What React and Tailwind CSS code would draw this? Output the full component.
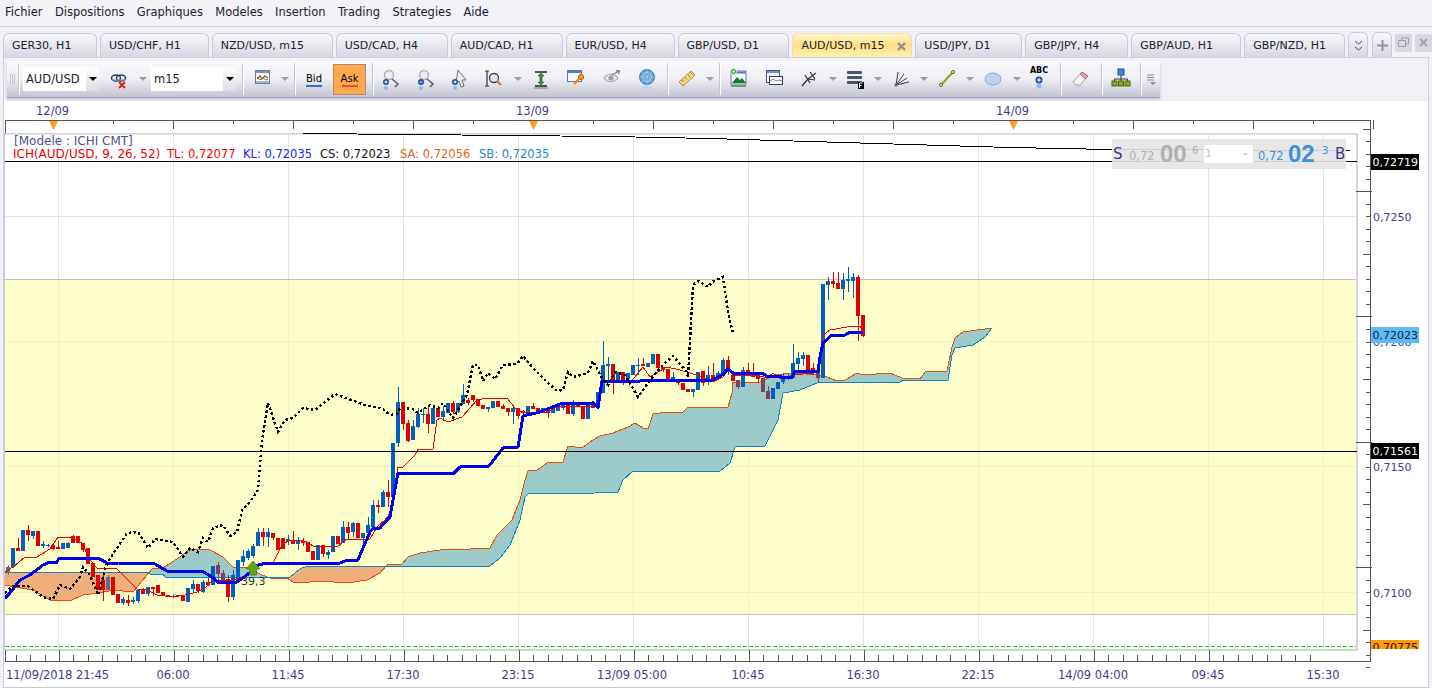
import React from 'react';

const font = '"DejaVu Sans", Verdana, sans-serif';

const menus = ['Fichier', 'Dispositions', 'Graphiques', 'Modeles', 'Insertion', 'Trading', 'Strategies', 'Aide'];

const tabs = [
  { label: 'GER30, H1', w: 'w-[94px]' },
  { label: 'USD/CHF, H1', w: 'w-[109px]' },
  { label: 'NZD/USD, m15', w: 'w-[121px]' },
  { label: 'USD/CAD, H4', w: 'w-[112px]' },
  { label: 'AUD/CAD, H1', w: 'w-[112px]' },
  { label: 'EUR/USD, H4', w: 'w-[109px]' },
  { label: 'GBP/USD, D1', w: 'w-[112px]' },
  { label: 'AUD/USD, m15', w: 'w-[120px]', active: true },
  { label: 'USD/JPY, D1', w: 'w-[107px]' },
  { label: 'GBP/JPY, H4', w: 'w-[103px]' },
  { label: 'GBP/AUD, H1', w: 'w-[110px]' },
  { label: 'GBP/NZD, H1', w: 'w-[101px]' },
];

// [haut, bas, meche haut, meche bas, couleur] - un chandelier tous les 5px depuis x=8
const candles = [
  [567,573,565,575,'d'],[548,567,548,568,'b'],[548,551,538,551,'r'],[530,551,530,551,'b'],[530,535,525,541,'r'],
  [531,536,531,539,'b'],[531,546,531,546,'r'],[544,546,541,548,'b'],[545,546,544,547,'b'],[545,549,543,550,'r'],
  [547,549,541,549,'r'],[543,549,543,549,'b'],[543,548,542,548,'b'],[536,543,535,543,'r'],[536,543,536,543,'r'],
  [543,550,543,552,'r'],[548,564,548,564,'r'],[563,577,563,577,'r'],[575,590,575,590,'r'],[580,590,575,601,'r'],
  [577,590,575,590,'d'],[577,595,577,595,'r'],[594,603,594,603,'r'],[599,603,597,605,'b'],[600,603,595,606,'r'],
  [600,602,597,604,'b'],[590,601,590,603,'b'],[590,594,588,594,'r'],[587,594,587,596,'b'],[587,589,587,596,'r'],
  [585,593,585,593,'r'],[592,596,592,596,'r'],[595,596,595,597,'r'],[596,597,594,598,'b'],[595,596,595,597,'r'],
  [596,601,596,601,'r'],[588,602,588,602,'b'],[584,589,580,593,'b'],[584,591,584,593,'r'],[582,592,580,593,'b'],
  [582,585,578,586,'r'],[566,585,566,585,'b'],[565,574,562,581,'m'],[573,580,570,583,'m'],[579,597,575,602,'r'],
  [575,597,570,600,'b'],[560,582,560,582,'b'],[556,562,550,566,'b'],[551,558,549,560,'b'],[546,556,544,558,'b'],
  [532,546,528,546,'b'],[532,537,528,546,'r'],[532,537,528,547,'b'],[533,538,533,540,'r'],[538,550,538,550,'r'],
  [538,549,538,549,'r'],[539,541,535,545,'b'],[540,544,531,544,'r'],[541,544,537,550,'b'],[541,543,538,546,'r'],
  [542,552,542,552,'r'],[551,560,551,560,'r'],[545,560,545,560,'b'],[545,554,545,557,'r'],[552,555,550,559,'b'],
  [536,552,536,552,'b'],[536,544,536,544,'r'],[527,543,521,543,'b'],[527,533,522,540,'r'],[523,532,522,537,'b'],
  [523,538,523,538,'r'],[533,538,533,545,'b'],[525,533,517,533,'b'],[505,527,500,527,'b'],[505,507,500,513,'r'],
  [492,507,490,507,'b'],[492,497,480,507,'r'],[443,497,443,500,'b'],[402,443,387,447,'b'],[402,424,402,430,'r'],
  [423,441,420,442,'r'],[426,440,420,440,'b'],[414,427,408,428,'b'],[414,415,408,423,'b'],[414,424,405,433,'r'],
  [408,424,408,424,'b'],[408,417,406,417,'r'],[411,417,406,421,'b'],[403,413,403,413,'b'],[403,412,401,414,'r'],
  [403,412,403,413,'b'],[395,404,384,404,'b'],[400,403,398,405,'r'],[395,400,395,402,'r'],[399,406,399,406,'r'],
  [405,409,405,409,'r'],[407,409,407,412,'b'],[401,408,401,408,'b'],[401,407,401,407,'r'],[406,409,404,409,'r'],
  [408,412,408,416,'r'],[408,412,406,424,'b'],[408,416,408,419,'r'],[411,413,410,414,'r'],[406,416,406,416,'b'],
  [406,409,403,409,'r'],[408,412,408,412,'r'],[408,411,408,412,'b'],[408,413,408,418,'r'],[408,413,408,413,'b'],
  [405,411,405,411,'b'],[404,408,402,410,'b'],[405,414,405,414,'r'],[402,414,400,416,'b'],[402,407,402,407,'r'],
  [406,419,406,419,'r'],[403,419,403,419,'b'],[402,408,402,408,'r'],[392,408,392,408,'b'],[365,393,341,393,'b'],
  [364,366,357,383,'b'],[364,380,364,394,'r'],[372,381,372,381,'b'],[372,381,372,385,'r'],[373,379,373,380,'b'],
  [365,375,365,375,'b'],[365,366,358,375,'b'],[364,366,358,366,'r'],[363,367,363,367,'b'],[354,364,354,364,'b'],
  [354,368,354,368,'r'],[367,370,367,372,'r'],[369,379,369,379,'r'],[377,379,372,382,'b'],[380,383,380,385,'r'],
  [383,390,383,390,'r'],[389,392,389,392,'r'],[389,392,389,397,'b'],[372,390,372,390,'b'],[371,383,371,386,'r'],
  [375,380,366,385,'b'],[375,379,363,382,'r'],[373,378,371,380,'b'],[360,375,358,375,'b'],[360,372,356,375,'r'],
  [375,381,375,381,'r'],[380,387,380,389,'m'],[370,387,367,387,'b'],[370,376,363,376,'r'],[373,377,363,377,'r'],
  [376,379,376,383,'r'],[378,392,378,392,'m'],[391,399,386,399,'m'],[388,399,388,399,'b'],[382,389,382,389,'b'],
  [377,382,373,384,'b'],[376,378,374,380,'b'],[363,378,344,378,'b'],[358,364,352,373,'b'],[355,359,352,366,'b'],
  [355,371,355,371,'r'],[368,372,363,375,'r'],[371,378,363,383,'m'],[284,378,284,378,'b'],[281,285,277,300,'b'],
  [281,284,272,288,'r'],[283,289,272,289,'r'],[280,289,273,300,'b'],[279,281,267,292,'b'],[277,281,273,298,'b'],
  [277,316,275,341,'r'],[315,336,315,337,'r'],
];

const tenkan = '5,572 13,567 25,557 37,557 50,549 58,537 72,537 82,543 90,560 97,568 117,569 123,575 137,589 147,590 157,595 173,597 185,595 197,592 205,588 213,580 220,581 233,580 242,577 248,574 260,565 273,563 282,545 288,541 300,540 307,542 313,546 332,546 337,547 343,542 347,539 370,539 377,527 385,520 390,513 397,477 398,467 403,467 415,455 418,449 433,449 437,420 440,418 448,422 462,417 477,400 487,398 507,398 515,408 522,412 547,412 557,407 580,406 597,407 602,380 610,382 617,382 630,383 643,367 650,377 658,372 667,367 680,370 690,373 700,376 713,382 723,377 728,369 735,375 757,375 767,378 773,373 780,379 793,375 813,373 818,370 820,357 823,335 830,330 847,327 860,326 863,332';
const kijun = '5,598 10,593 20,580 30,575 43,565 50,562 57,562 59,558 98,558 107,563 118,563 155,564 167,571 202,571 212,577 218,582 237,582 247,575 258,565 267,563 340,563 345,561 358,560 363,548 370,532 372,529 380,528 390,517 393,500 398,473 454,473 460,467 489,466 503,448 518,447 523,416 540,412 560,404 593,403 598,407 602,381 640,381 647,380 713,380 722,375 728,369 733,373 762,373 767,376 777,376 782,377 792,377 795,371 818,371 820,357 823,343 832,335 845,335 850,332 863,332';
const chikou = '5,593 13,586 28,586 43,597 53,599 60,585 70,589 80,577 83,567 90,575 98,595 107,563 127,533 138,532 148,548 155,539 173,542 183,557 190,548 198,552 203,538 208,542 213,528 223,525 230,536 237,532 242,510 250,502 258,490 262,440 268,403 278,432 285,420 293,418 303,408 315,410 335,394 365,405 383,409 390,415 397,414 400,408 413,409 418,413 430,405 438,408 443,403 453,418 467,395 473,365 478,365 483,381 488,373 495,379 503,365 517,364 523,356 533,368 547,382 557,391 563,390 568,372 573,377 588,373 593,361 602,378 608,385 615,372 625,375 638,397 650,380 663,365 673,356 687,372 688,377 693,285 698,281 708,287 712,282 723,277 728,312 733,333';
const spanA = '5,585 15,587 33,590 50,600 70,601 83,595 100,593 113,590 133,592 147,575 153,568 163,568 180,557 190,549 210,550 223,557 233,567 247,567 262,575 270,578 287,578 293,582 310,582 320,581 347,583 367,580 380,573 387,565 392,564 402,564 408,557 420,553 440,550 470,549 490,548 497,535 512,520 520,500 525,480 528,471 537,470 547,463 563,462 568,446 575,447 583,447 593,440 600,436 613,433 628,427 635,423 643,428 648,429 653,414 660,413 683,412 688,407 710,407 728,407 732,393 733,382 760,382 775,375 793,373 818,375 827,377 837,381 845,380 857,373 863,375 890,373 902,378 920,379 925,372 947,371 952,347 955,338 963,332 992,328';
const spanB = '5,572 145,572 150,574 163,574 165,577 290,577 300,569 307,566 490,566 500,558 510,545 520,520 525,497 528,494 595,493 597,492 618,492 623,480 633,471 720,471 730,463 735,447 765,446 778,420 783,393 800,390 817,383 822,382 900,382 903,380 948,380 952,355 955,348 973,345 985,337 992,328';
const cloudShape = `${spanA} ${spanB.split(' ').reverse().join(' ')}`;

const candleColors = { b: '#0060c0', r: '#e00000', m: '#80405c', d: '#5f6b80' };

const gridX = [58, 173, 288, 403, 518, 633, 748, 863, 978, 1093, 1208, 1323];
const timeLabels = [
  [173, '06:00'], [288, '11:45'], [403, '17:30'], [518, '23:15'], [632, '13/09 05:00'], [748, '10:45'],
  [863, '16:30'], [978, '22:15'], [1093, '14/09 04:00'], [1208, '09:45'], [1323, '15:30'],
];
const topTicks = Array.from({ length: 23 }, (_, i) => 53 + i * 60);
const bottomTicks = Array.from({ length: 92 }, (_, i) => 1.5 + i * 14.375);
const sideTicks = Array.from({ length: 44 }, (_, i) => 128.5 + i * 12.53);

const Caret = ({ w }) => (
  <div className={`flex items-center justify-center ${w}`}>
    <div className="w-0 h-0 border-x-[4px] border-x-transparent border-t-[4px] border-t-[#9a9aa8]" />
  </div>
);

const Sep = ({ ml = 'ml-0' }) => <div className={`w-px h-[32px] bg-[#c4c4d0] shadow-[1px_0_0_#ffffff] ${ml}`} />;

const Slot = ({ w, ml = '', children }) => (
  <div className={`flex items-center justify-center h-full ${w} ${ml}`}>{children}</div>
);

const Dropdown = ({ label, w }) => (
  <div className={`flex items-center h-[24px] bg-white ${w}`}>
    <span className="flex-1 pl-[3px] pt-[1px] text-[11.5px] text-[#1c1c30]">{label}</span>
    <div className="flex items-center justify-center w-[13px] h-full bg-gradient-to-b from-white to-[#dcdce4]">
      <div className="w-0 h-0 border-x-[4px] border-x-transparent border-t-[4px] border-t-black" />
    </div>
  </div>
);

const Svg = ({ children, w = 20, h = 22 }) => (
  <svg width={w} height={h} viewBox={`0 0 ${w} ${h}`} fill="none">{children}</svg>
);

const Magnifier = ({ children }) => (
  <Svg>
    <circle cx="8" cy="7" r="4.5" fill="#eeeef2" stroke="#b0b0b8" strokeWidth="1.5" />
    <path d="M11 11l6 5-3 3" stroke="#555560" strokeWidth="1.4" />
    <circle cx="5" cy="14" r="3" fill="#1c50a8" />
    {children}
    <circle cx="5" cy="20" r="2" fill="#9cb4d8" />
  </Svg>
);

const toolbarIcons = {
  link: (
    <Svg>
      <ellipse cx="6" cy="10" rx="4.5" ry="3" stroke="#1c3a70" strokeWidth="1.4" />
      <ellipse cx="11" cy="10" rx="4.5" ry="3" stroke="#1c3a70" strokeWidth="1.4" />
      <path d="M2 12h13" stroke="#8898b0" strokeWidth="1.2" />
      <path d="M9 14l6 6M15 14l-6 6" stroke="#e02010" strokeWidth="2" />
    </Svg>
  ),
  chart: (
    <Svg w={16} h={22}>
      <rect x="0.5" y="2.5" width="14" height="13" fill="#fff" stroke="#6878a8" />
      <rect x="1" y="3" width="13" height="2" fill="#7890c8" />
      <path d="M2 11l3-3 2 3 3-3 3 2" stroke="#d03020" strokeWidth="1.2" />
      <path d="M2 9l3 3 3-2 3 2 2-1" stroke="#30a040" strokeWidth="1" />
      <rect x="1" y="13" width="13" height="2" fill="#a8b4d0" />
      <rect x="1" y="17" width="13" height="2" fill="#d8d8e4" />
    </Svg>
  ),
  zoomIn: <Magnifier><path d="M3.5 14h3M5 12.5v3" stroke="#fff" strokeWidth="1" /></Magnifier>,
  zoomOut: <Magnifier><path d="M3.5 14h3" stroke="#fff" strokeWidth="1" /></Magnifier>,
  pointer: (
    <Svg>
      <path d="M9 2l8 10h-4l2 6-3 1-2-6-3 2z" fill="#f2f2f4" stroke="#707078" />
      <circle cx="6" cy="14" r="3" fill="#1c50a8" />
      <path d="M4.5 14h3M6 12.5v3" stroke="#fff" />
      <circle cx="6" cy="20" r="2" fill="#9cb4d8" />
    </Svg>
  ),
  zoomAxis: (
    <Svg>
      <path d="M3 3v15M1 3h4M1 18h4" stroke="#333" strokeWidth="1.2" />
      <circle cx="10" cy="10" r="4.5" fill="#dceaf8" stroke="#404048" strokeWidth="1.3" />
      <path d="M13 13l4 4" stroke="#c08030" strokeWidth="2" />
    </Svg>
  ),
  fit: (
    <Svg>
      <path d="M4 4h12M4 18h12" stroke="#222" strokeWidth="1.4" />
      <path d="M10 5l3 3h-2v6h2l-3 3-3-3h2V8H7z" fill="#2f9a30" stroke="#185018" strokeWidth="0.6" />
      <ellipse cx="10" cy="20" rx="8" ry="1" fill="#a0a0aa" />
    </Svg>
  ),
  windowKey: (
    <Svg>
      <rect x="1.5" y="2.5" width="14" height="11" fill="#f4f8ff" stroke="#5878c0" />
      <rect x="2" y="3" width="13" height="2" fill="#5878c0" />
      <circle cx="15" cy="9" r="2.6" fill="#f0a020" stroke="#b06808" />
      <path d="M13 11l-5 5" stroke="#e09018" strokeWidth="2.4" />
      <path d="M6 19h6" stroke="#f4d8a0" strokeWidth="2" />
    </Svg>
  ),
  eye: (
    <Svg>
      <path d="M2 10c4-5 10-5 14 0-4 5-10 5-14 0z" fill="#ececee" stroke="#a8a8b0" strokeWidth="1.2" />
      <circle cx="9" cy="10" r="2.6" fill="#a0a0a8" />
      <path d="M10 7l7-4M14 2.5l3.5.5-1 3" stroke="#808088" strokeWidth="1.3" />
    </Svg>
  ),
  globe: (
    <Svg>
      <circle cx="10" cy="9" r="7.5" fill="#5fa0d8" stroke="#3e80bc" />
      <circle cx="10" cy="9" r="4.5" stroke="#a8d0f0" />
      <path d="M10 1.5v15M2.5 9h15M5 4l10 10M15 4L5 14" stroke="#a8d0f0" strokeWidth="0.7" />
      <ellipse cx="10" cy="19.5" rx="5" ry="1.5" fill="#b8d4ec" />
    </Svg>
  ),
  ruler: (
    <Svg>
      <path d="M2 14L14 3l4 4L6 18z" fill="#f4d880" stroke="#b08c30" />
      <path d="M5 12l2 2M8 9.5l2 2M11 7l2 2M13.5 4.5l2 2" stroke="#9a7a28" />
    </Svg>
  ),
  picture: (
    <Svg w={18} h={22}>
      <rect x="1" y="3" width="15" height="13" fill="#f4f8ff" stroke="#5878c0" />
      <rect x="1.5" y="3.5" width="14" height="2" fill="#5878c0" />
      <path d="M2 15l5-6 3 3 2-2 4 5z" fill="#1f7a20" />
      <circle cx="3.5" cy="3.5" r="3" fill="#4aa838" stroke="#fff" strokeWidth="0.7" />
      <path d="M2 3.5h3M3.5 2v3" stroke="#fff" strokeWidth="0.8" />
      <rect x="1" y="17" width="15" height="2" fill="#6f9d70" />
    </Svg>
  ),
  windows: (
    <Svg>
      <rect x="1.5" y="2.5" width="13" height="12" fill="#f4f6fc" stroke="#3c5498" />
      <rect x="2" y="3" width="12" height="2" fill="#7890c8" />
      <rect x="4.5" y="8.5" width="13" height="8" fill="#fff" stroke="#2a3c78" />
      <path d="M5 13l3-2 3 2 3-1 3 1" stroke="#606070" strokeWidth="0.8" />
    </Svg>
  ),
  fork: (
    <Svg>
      <path d="M2 18l6-7M8 11l8-6M8 11l7 1M5 7l5 8M10 4l5 7" stroke="#303038" strokeWidth="1.2" />
    </Svg>
  ),
  fibo: (
    <Svg>
      <rect x="1" y="3" width="15" height="3" rx="1" fill="#4a5468" />
      <rect x="1" y="8" width="15" height="3" rx="1" fill="#4a5468" />
      <rect x="1" y="13" width="15" height="3" rx="1" fill="#4a5468" />
      <rect x="12" y="14" width="6" height="7" fill="#000" />
      <path d="M13.5 20v-5h3M13.5 17.5h2" stroke="#fff" />
    </Svg>
  ),
  fan: (
    <Svg>
      <path d="M4 17L6 4M4 17L12 6M4 17l11-7M4 17l13-3" stroke="#404048" strokeWidth="1" />
      <circle cx="4" cy="17" r="1.5" fill="#606068" />
    </Svg>
  ),
  line: (
    <Svg w={16} h={22}>
      <path d="M2 17L14 4" stroke="#88a820" strokeWidth="2" />
      <circle cx="2" cy="17" r="1.5" fill="#fff" stroke="#506010" />
      <circle cx="14" cy="4" r="1.5" fill="#fff" stroke="#506010" />
    </Svg>
  ),
  oval: (
    <Svg w={18} h={22}>
      <ellipse cx="9" cy="11" rx="8" ry="6" fill="#bcd4f0" stroke="#88a8d0" />
    </Svg>
  ),
  abc: (
    <div className="relative flex flex-col items-center h-[26px] w-[16px]">
      <span className="text-[8px] leading-[10px] font-bold text-black">ABC</span>
      <Svg w={10} h={14}>
        <circle cx="5" cy="4" r="3.5" fill="#1c50a8" />
        <path d="M3 4h4M5 2v4" stroke="#fff" />
        <circle cx="5" cy="10" r="2.5" fill="#9cb4d8" />
      </Svg>
    </div>
  ),
  eraser: (
    <Svg>
      <path d="M2 14L11 4l6 4-8 9H5z" fill="#f4f4f6" stroke="#a0a0a8" />
      <path d="M9 6l2-2 6 4-3 3z" fill="#e898a8" stroke="#c07080" />
      <path d="M3 19h10" stroke="#d0d0d8" strokeWidth="1.5" />
    </Svg>
  ),
  org: (
    <Svg>
      <rect x="7" y="1" width="6" height="6" fill="#3f88e0" stroke="#1c50a8" />
      <path d="M10 7v4M3.5 13v-2h13v2M10 11v2" stroke="#303038" />
      <rect x="1" y="13" width="5" height="5" fill="#88a828" stroke="#506010" />
      <rect x="7.5" y="13" width="5" height="5" fill="#88a828" stroke="#506010" />
      <rect x="14" y="13" width="5" height="5" fill="#88a828" stroke="#506010" />
    </Svg>
  ),
};

const Toolbar = () => (
  <div className="flex items-center h-[37px] w-[1153px] ml-[3px] mt-[3px] bg-gradient-to-b from-[#fafafc] via-[#eeeef3] to-[#c4c4d4] border-b border-[#9c9cb4] shadow-[0_2px_3px_#c8c8d4]">
    <div className="w-[11px] flex items-center justify-center">
      <div className="w-[5px] h-[10px] bg-[repeating-linear-gradient(90deg,#c4c4cc_0_1px,transparent_1px_2px)]" />
    </div>
    <Sep />
    <Dropdown label="AUD/USD" w="w-[76px] ml-[4px]" />
    <Slot w="w-[28px]" ml="ml-[7px]">{toolbarIcons.link}</Slot>
    <Caret w="w-[17px]" />
    <Dropdown label="m15" w="w-[85px]" />
    <Sep ml="ml-[6px]" />
    <Slot w="w-[30px]" ml="ml-[5px]">{toolbarIcons.chart}</Slot>
    <Caret w="w-[14px]" />
    <Sep ml="ml-[2px]" />
    <div className="flex flex-col items-center w-[38px]">
      <span className="text-[10px] leading-[13px] text-black">Bid</span>
      <div className="w-[16px] h-[2px] bg-[#2070e0]" />
    </div>
    <div className="flex flex-col items-center justify-center w-[33px] h-[31px] bg-[#ffa850] border border-[#a89060]">
      <span className="text-[10px] leading-[13px] text-black">Ask</span>
      <div className="w-[16px] h-[2px] bg-[#f05020]" />
    </div>
    <Sep ml="ml-[6px]" />
    <Slot w="w-[36px]">{toolbarIcons.zoomIn}</Slot>
    <Slot w="w-[33px]">{toolbarIcons.zoomOut}</Slot>
    <Slot w="w-[34px]">{toolbarIcons.pointer}</Slot>
    <Slot w="w-[36px]">{toolbarIcons.zoomAxis}</Slot>
    <Caret w="w-[12px]" />
    <Slot w="w-[34px]">{toolbarIcons.fit}</Slot>
    <Slot w="w-[36px]">{toolbarIcons.windowKey}</Slot>
    <Slot w="w-[36px]">{toolbarIcons.eye}</Slot>
    <Slot w="w-[34px]">{toolbarIcons.globe}</Slot>
    <Sep ml="ml-[3px]" />
    <Slot w="w-[38px]">{toolbarIcons.ruler}</Slot>
    <Caret w="w-[8px]" />
    <Sep ml="ml-[5px]" />
    <Slot w="w-[38px]">{toolbarIcons.picture}</Slot>
    <Slot w="w-[34px]">{toolbarIcons.windows}</Slot>
    <Slot w="w-[36px]">{toolbarIcons.fork}</Slot>
    <Caret w="w-[10px]" />
    <Slot w="w-[35px]">{toolbarIcons.fibo}</Slot>
    <Caret w="w-[10px]" />
    <Slot w="w-[38px]">{toolbarIcons.fan}</Slot>
    <Caret w="w-[6px]" />
    <Slot w="w-[40px]">{toolbarIcons.line}</Slot>
    <Caret w="w-[6px]" />
    <Slot w="w-[40px]">{toolbarIcons.oval}</Slot>
    <Caret w="w-[8px]" />
    <Slot w="w-[36px]">{toolbarIcons.abc}</Slot>
    <Sep ml="ml-[3px]" />
    <Slot w="w-[40px]">{toolbarIcons.eraser}</Slot>
    <Sep />
    <Slot w="w-[38px]">{toolbarIcons.org}</Slot>
    <Sep />
    <Slot w="w-[19px]">
      <Svg w={10} h={12}>
        <path d="M1 2h7M1 4.5h7M1 7h7" stroke="#8a8a98" />
        <path d="M4 9h6l-3 3z" fill="#8a8a98" />
      </Svg>
    </Slot>
  </div>
);

const AxisText = ({ x, y, anchor = 'start', fill = '#3c3c90', size = '11.5', children }) => (
  <text x={x} y={y} textAnchor={anchor} fill={fill} fontSize={size} fontFamily={font}>{children}</text>
);

const PriceTag = ({ y, h = 16, bg, fill = '#ffffff', children }) => (
  <g>
    <rect x="1371" y={y} width="48" height={h} fill={bg} />
    <text x="1372.5" y={y + 12} fill={fill} fontSize="11" fontFamily={font}>{children}</text>
  </g>
);

const Chart = () => (
  <svg className="block" width="1424" height="586" viewBox="4 101 1424 586" shapeRendering="crispEdges">
    <defs>
      <clipPath id="orangeZone">
        <rect x="0" y="500" width="150" height="150" />
        <rect x="266" y="500" width="122" height="150" />
      </clipPath>
      <clipPath id="tealZone">
        <rect x="150" y="300" width="116" height="350" />
        <rect x="388" y="300" width="640" height="350" />
      </clipPath>
      <clipPath id="tagClip"><rect x="1371" y="640" width="48" height="9" /></clipPath>
    </defs>

    {/* zone de prix */}
    <rect x="5" y="279" width="1351" height="335" fill="#ffffcc" />
    {gridX.map((x) => <line key={x} x1={x + 0.5} y1="134" x2={x + 0.5} y2="649" stroke="#e2e2e2" />)}
    {gridX.map((x) => <line key={x} x1={x + 0.5} y1="280" x2={x + 0.5} y2="614" stroke="#f2f0c4" />)}
    {[216.5, 592.5, 341.5, 466.5].map((y) => <line key={y} x1="5" y1={y} x2="1356" y2={y} stroke={y > 279 && y < 614 ? '#f2f0c4' : '#e2e2e6'} />)}
    <line x1="5" y1="279.5" x2="1356" y2="279.5" stroke="#c4c4c4" />
    <line x1="5" y1="614.5" x2="1356" y2="614.5" stroke="#c4c4c8" />

    {/* nuage ichimoku */}
    <polygon points={cloudShape} fill="#f0ae7a" clipPath="url(#orangeZone)" />
    <polygon points={cloudShape} fill="#9bcac8" clipPath="url(#tealZone)" />
    <polyline points={spanA} fill="none" stroke="#e84a10" strokeWidth="1" />
    <polyline points={spanB} fill="none" stroke="#0a86c0" strokeWidth="1" />

    {candles.map(([top, bot, hi, lo, k], i) => {
      const x = 8 + i * 5;
      return (
        <g key={x} fill={candleColors[k]}>
          <rect x={x} y={hi} width="1" height={lo - hi} />
          <rect x={x - 2} y={top} width="4" height={Math.max(bot - top, 1)} />
        </g>
      );
    })}

    <polyline points={tenkan} fill="none" stroke="#f00000" strokeWidth="1" />
    <polyline points={kijun} fill="none" stroke="#0000f0" strokeWidth="3" />
    <polyline points={chikou} fill="none" stroke="#000000" strokeWidth="2.4" strokeDasharray="2.5 2.5" />

    {/* signal */}
    <path d="M253 561l7 8h-3.500v6h-7v-6H246z" fill="#62a818" stroke="#3c7810" strokeWidth="0.7" shapeRendering="auto" />
    <AxisText x="241" y="585" fill="#303040" size="11">39,3</AxisText>

    {/* cadre */}
    <line x1="5" y1="133.5" x2="1357" y2="133.5" stroke="#d0d0d8" />
    <line x1="5" y1="134.5" x2="1357" y2="134.5" stroke="#e4e4ea" />
    <line x1="4.5" y1="133" x2="4.5" y2="650" stroke="#c8c8d4" />
    <rect x="1356" y="133" width="2" height="517" fill="#d4d4de" />
    <rect x="5" y="649" width="1353" height="2" fill="#d0d0d8" />

    {/* lignes horizontales */}
    <polyline points="303,133.5 410,134.5 510,135.5 610,136.5 710,138.5 810,141.5 910,144.5 1010,147.5 1111,149.5 1350,150.5" fill="none" stroke="#000" />
    <line x1="5" y1="161.5" x2="1357" y2="161.5" stroke="#000" />
    <line x1="5" y1="451.5" x2="1357" y2="451.5" stroke="#000" />
    <line x1="5" y1="646.5" x2="1356" y2="646.5" stroke="#00e000" strokeDasharray="4 2" />

    {/* axe du haut */}
    <line x1="5" y1="120.5" x2="1371" y2="120.5" stroke="#555" />
    <line x1="5.500" y1="120" x2="5.500" y2="133" stroke="#555" />
    {topTicks.map((x, i) => <line key={x} x1={x + 0.5} y1="120" x2={x + 0.5} y2={i % 2 === 0 ? 129 : 124} stroke="#555" />)}
    {[53, 533, 1013].map((x) => (
      <path key={x} d={`M${x - 4} 121h9l-4.500 9z`} fill="#f8a020" shapeRendering="auto" />
    ))}
    {[[36, '12/09'], [516, '13/09'], [996, '14/09']].map(([x, t]) => <AxisText key={x} x={x} y="115">{t}</AxisText>)}

    {/* axe du bas */}
    <line x1="5" y1="661.5" x2="1371" y2="661.5" stroke="#555" />
    <line x1="5.500" y1="650" x2="5.500" y2="661" stroke="#555" />
    {bottomTicks.map((x, i) => {
      const big = i % 8 === 4;
      return <line key={i} x1={Math.round(x) + 0.5} y1={big ? 650 : 655} x2={Math.round(x) + 0.5} y2="661" stroke="#555" />;
    })}
    <AxisText x="6" y="679">11/09/2018 21:45</AxisText>
    {timeLabels.map(([x, t]) => <AxisText key={x} x={x} y="679" anchor="middle">{t}</AxisText>)}

    {/* axe de droite */}
    <line x1="1370.500" y1="120" x2="1370.500" y2="662" stroke="#555" />
    {sideTicks.map((y, i) => {
      const k = (i + 6 - 1) % 10;
      const len = k === 0 ? 14 : k === 5 ? 7 : 4;
      const ty = Math.round(y) + 0.5;
      return <line key={i} x1={1370 - len} y1={ty} x2={k === 0 ? 1372 : 1370} y2={ty} stroke="#555" />;
    })}
    <AxisText x="1373" y="221" size="11">0,7250</AxisText>
    <AxisText x="1373" y="346" size="11">0,7200</AxisText>
    <AxisText x="1373" y="471" size="11">0,7150</AxisText>
    <AxisText x="1373" y="597" size="11">0,7100</AxisText>
    <PriceTag y={154} bg="#000000">0,72719</PriceTag>
    <PriceTag y={327} bg="#5cbcf8" fill="#102030">0,72023</PriceTag>
    <PriceTag y={443} bg="#000000">0,71561</PriceTag>
    <rect x="1371" y="640" width="48" height="9" fill="#ff9a00" />
    <text x="1372.500" y="651" fill="#1c1408" fontSize="11" fontFamily={font} clipPath="url(#tagClip)">0,70775</text>
  </svg>
);

const DealPanel = () => (
  <div className="absolute left-[1108px] top-[38px] flex items-center h-[30px] w-[234px] bg-[#e4e4e4]/90 text-[#b0b0b0]">
    <span className="ml-[1px] w-[16px] text-[15px] text-[#3c3c88]">S</span>
    <span className="w-[24px] text-[11.5px] mt-[6px] whitespace-nowrap">0,72</span>
    <span className="ml-[7px] w-[26px] text-[24px] font-bold leading-none font-['Liberation_Sans']">00</span>
    <span className="ml-[6px] w-[6px] mb-[8px] text-[10px]">6</span>
    <div className="flex items-center ml-[6px] w-[49px] h-[18px] bg-white">
      <span className="pl-[1px] text-[11px] text-[#c8c8c8]">1</span>
      <div className="ml-auto mr-[5px] w-0 h-0 border-x-[3px] border-x-transparent border-t-[3px] border-t-[#d4d4d4]" />
    </div>
    <span className="ml-[5px] w-[24px] text-[11.5px] mt-[6px] text-[#3c90dc] whitespace-nowrap">0,72</span>
    <span className="ml-[6px] w-[27px] text-[24px] font-bold leading-none text-[#3c90dc] font-['Liberation_Sans']">02</span>
    <span className="ml-[7px] w-[6px] mb-[8px] text-[10px] text-[#3c90dc]">3</span>
    <span className="ml-[7px] text-[15px] text-[#3c3c88]">B</span>
  </div>
);

const Legend = () => (
  <div className="absolute left-[9px] top-[34px] leading-[13px]">
    <div className="pl-[1px] text-[12px] text-[#50508c]">[Modele : ICHI CMT]</div>
    <div className="flex gap-[9px] text-[11.5px] whitespace-nowrap">
      <span className="w-[145px] text-[12px] text-[#f00000]">ICH(AUD/USD, 9, 26, 52)</span>
      <span className="w-[67px] text-[#f00000]">TL: 0,72077</span>
      <span className="w-[68px] text-[#2020f0]">KL: 0,72035</span>
      <span className="w-[71px] text-[#101010]">CS: 0,72023</span>
      <span className="w-[70px] text-[#e86020]">SA: 0,72056</span>
      <span className="text-[#1c88c8]">SB: 0,72035</span>
    </div>
  </div>
);

const App = () => (
  <div className="relative flex flex-col w-[1432px] h-[688px] overflow-hidden bg-[#f0f0f6]" style={{ fontFamily: font }}>
    <div className="flex items-center gap-[12.3px] h-[27px] pl-[5px] text-[11.5px] text-[#1c1c30] bg-[#f2f2f7] border-b border-[#d0d0dc]">
      {menus.map((m) => <span key={m}>{m}</span>)}
    </div>

    <div className="flex items-end h-[31px] pl-[3px] gap-[3px]">
      {tabs.map((t) => (
        <div
          key={t.label}
          className={`flex items-center h-[24px] pt-[2px] pl-[8px] pr-[5px] text-[11px] text-[#1c1c30] border border-b-0 rounded-t-[6px] ${t.w} ${
            t.active
              ? 'border-[#e8e0b8] bg-gradient-to-b from-[#fff6c8] via-[#ffdf80] to-[#fff0b0]'
              : 'border-[#c8c8dc] bg-gradient-to-b from-[#f6f6fa] to-[#d8d8e4]'
          }`}
        >
          <span className="flex-1 whitespace-nowrap">{t.label}</span>
          {t.active && (
            <svg width="9" height="9" viewBox="0 0 9 9">
              <path d="M1 1l7 7M8 1L1 8" stroke="#8a8aa0" strokeWidth="2" />
            </svg>
          )}
        </div>
      ))}
      <div className="flex items-center justify-center w-[20px] h-[25px] border border-b-0 border-[#c8c8dc] rounded-t-[6px] bg-gradient-to-b from-[#f6f6fa] to-[#d8d8e4]">
        <svg width="9" height="11" viewBox="0 0 9 11" fill="none">
          <path d="M1 1l3.500 3L8 1M1 7l3.500 3L8 7" stroke="#505060" />
        </svg>
      </div>
      <div className="flex items-center justify-center ml-[1px] w-[20px] h-[25px] border border-b-0 border-[#c8c8dc] rounded-t-[6px] bg-gradient-to-b from-[#f6f6fa] to-[#d8d8e4]">
        <svg width="11" height="11" viewBox="0 0 11 11"><path d="M5.500 0v11M0 5.500h11" stroke="#9090a8" strokeWidth="2" /></svg>
      </div>
      <div className="flex items-center justify-center self-start mt-[7px] w-[17px] h-[18px] bg-[#d8d8e4]">
        <svg width="11" height="11" viewBox="0 0 11 11" fill="none">
          <path d="M3.500 3V1h7v6H8M.500 3.500h7v6h-7z" stroke="#9a9ab0" />
        </svg>
      </div>
      <div className="flex items-center justify-center self-start mt-[7px] w-[17px] h-[18px] bg-[#d8d8e4]">
        <svg width="9" height="9" viewBox="0 0 9 9"><path d="M1 1l7 7M8 1L1 8" stroke="#a4a4b8" strokeWidth="2" /></svg>
      </div>
    </div>

    <div className="flex-1 flex flex-col ml-[3px] mr-[3px] border border-[#d0d0dc] border-b-[#c8c8d8]">
      <Toolbar />
      <div className="relative mt-[3px] h-[586px] bg-white">
        <Chart />
        <Legend />
        <DealPanel />
      </div>
    </div>
  </div>
);

export default App;
